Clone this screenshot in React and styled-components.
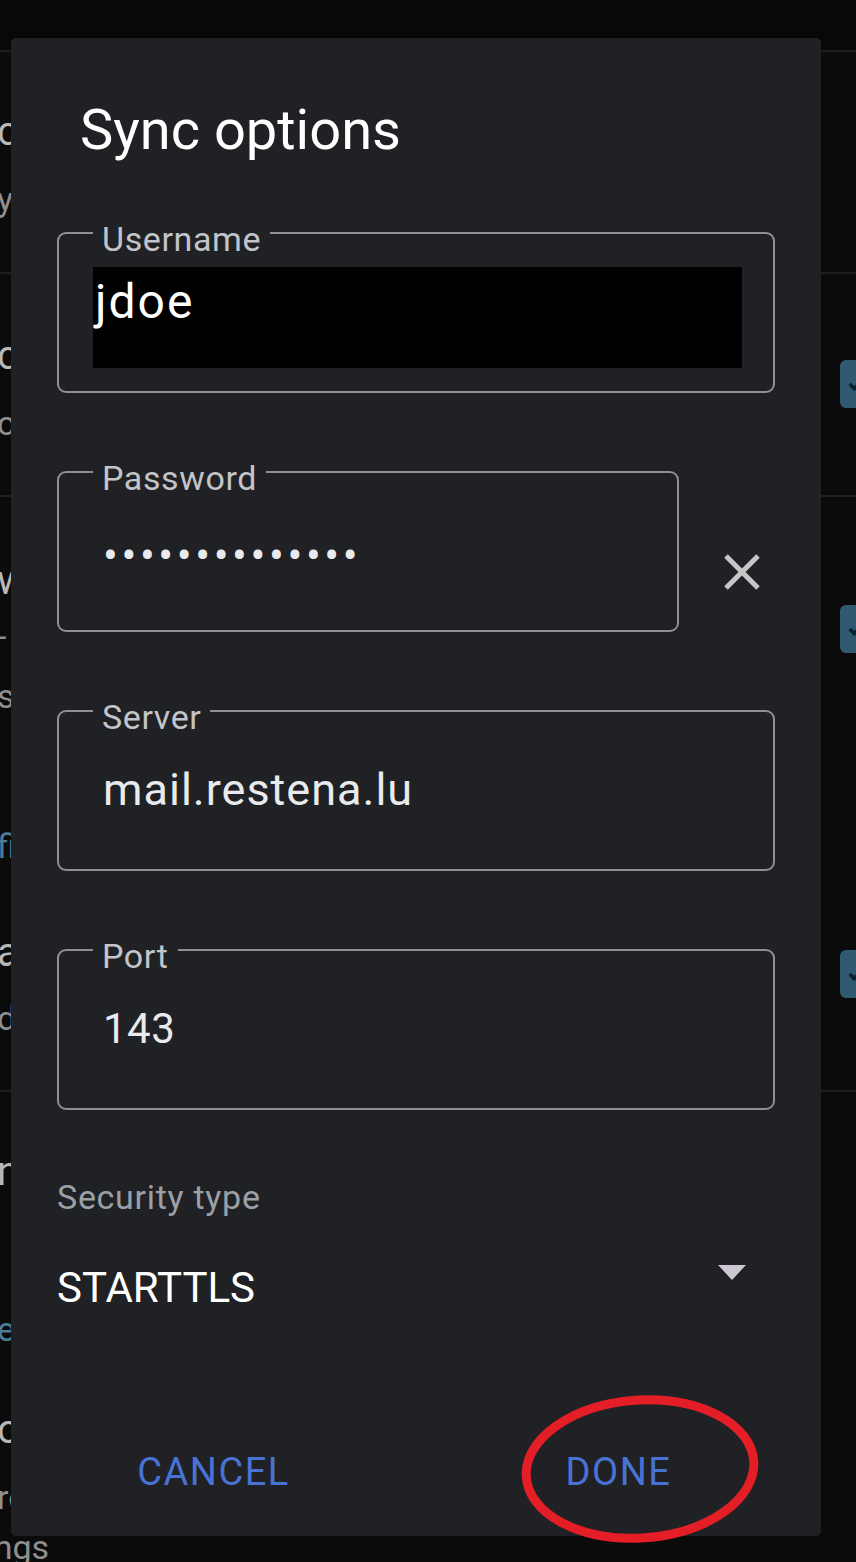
import React from "react";
import styled, { createGlobalStyle } from "styled-components";

const GlobalStyle = createGlobalStyle`
  html, body {
    margin: 0;
    padding: 0;
    background: #0a0a0a;
  }
  * {
    box-sizing: border-box;
  }
`;

const Screen = styled.div`
  position: relative;
  width: 856px;
  height: 1562px;
  overflow: hidden;
  background: #0a0a0a;
  font-family: Roboto, "Noto Sans", sans-serif;
`;

/* ---------- settings list behind the dialog ---------- */

const TopBar = styled.div`
  height: 50px;
  background: #080808;
`;

const Separator = styled.div`
  height: 2px;
  background: #1f1f1f;
`;

const BgRow = styled.div`
  display: flex;
  height: ${(p) => p.$h}px;
  background: #0b0b0b;
`;

const BgTexts = styled.div`
  flex: 1;
  display: flex;
  flex-direction: column;
  margin-left: -3px;
`;

const BgLine = styled.div`
  margin-top: ${(p) => p.$mt || 0}px;
  margin-left: ${(p) => p.$ml || 0}px;
  font-size: ${(p) => (p.$title ? 40 : 34)}px;
  line-height: ${(p) => (p.$title ? 48 : 42)}px;
  color: ${(p) => (p.$link ? "#4d7c98" : p.$title ? "#b8b8b8" : "#8f8f8f")};
  white-space: nowrap;
`;

const BgChecks = styled.div`
  display: flex;
  flex-direction: column;
  margin-right: -34px;
`;

const Checkbox = styled.div`
  width: 50px;
  height: 48px;
  margin-top: ${(p) => p.$mt}px;
  border-radius: 6px;
  background: #2f5a72;
  display: flex;
  align-items: center;
  padding-left: 6px;
`;

/* ---------- dialog ---------- */

const Dialog = styled.div`
  position: absolute;
  left: 11px;
  top: 38px;
  width: 810px;
  height: 1498px;
  background: #202124;
  border-radius: 5px;
  display: flex;
  flex-direction: column;
  padding: 60px 46px 0;
`;

const Title = styled.h1`
  margin: 0 0 0 23px;
  font-size: 56px;
  line-height: 64px;
  font-weight: 400;
  color: #ffffff;
`;

const FieldRow = styled.div`
  display: flex;
  align-items: flex-end;
  margin-top: ${(p) => p.$mt}px;
`;

const Field = styled.fieldset`
  margin: 0;
  padding: 0 0 0 34px;
  border: 2px solid #8f9095;
  border-radius: 9px;
  width: ${(p) => p.$w || "100%"};
  min-width: 0;
`;

const Legend = styled.legend`
  padding: 12px 9px 0;
  font-size: 34px;
  line-height: 40px;
  letter-spacing: 0.6px;
  color: #c3c4c9;
`;

const Value = styled.div`
  display: flex;
  align-items: center;
  height: 132px;
  padding: 0 0 ${(p) => p.$lift}px 10px;
  font-size: ${(p) => p.$size || 45}px;
  letter-spacing: ${(p) => (p.$size ? 0.5 : 1)}px;
  color: #e8eaed;
  white-space: nowrap;
`;

const Redacted = styled.div`
  display: flex;
  align-items: center;
  width: 649px;
  height: 101px;
  margin: 8px 0 23px;
  padding: 0 0 32px 2px;
  background: #000000;
  font-size: 48px;
  letter-spacing: 2px;
  color: #ffffff;
`;

const Dots = styled.span`
  font-size: 44px;
  letter-spacing: 3.6px;
  color: #e8eaed;
`;

const ClearButton = styled.button`
  display: flex;
  align-items: center;
  justify-content: center;
  width: 38px;
  height: 38px;
  margin: 0 0 41px 44px;
  padding: 0;
  border: none;
  background: none;
  color: #c6c6c6;
`;

const SelectLabel = styled.div`
  margin-top: 67px;
  font-size: 34px;
  line-height: 40px;
  letter-spacing: 0.7px;
  color: #9aa0a6;
`;

const SelectRow = styled.div`
  display: flex;
  justify-content: space-between;
  align-items: flex-start;
  margin-top: 46px;
`;

const SelectValue = styled.div`
  font-size: 42px;
  line-height: 50px;
  color: #ffffff;
`;

const Caret = styled.svg`
  margin: 2px 29px 0 0;
`;

const Buttons = styled.div`
  display: flex;
  height: 128px;
  margin: auto -46px 0;
`;

const TextButton = styled.button`
  flex: 1;
  border: none;
  background: none;
  padding: 0;
  font-family: Roboto, "Noto Sans", sans-serif;
  font-size: 38px;
  letter-spacing: 1.5px;
  color: #4873d4;
`;

const Mark = styled.svg`
  position: absolute;
  left: 507px;
  top: 1355px;
  pointer-events: none;
`;

const CheckIcon = () => (
  <svg width="22" height="22" viewBox="0 0 24 24">
    <path d="M4 12l5 5L20 6" fill="none" stroke="#0d2230" strokeWidth="4" />
  </svg>
);

const App = () => {
  return (
    <Screen>
      <GlobalStyle />
      <TopBar />
      <Separator />
      <BgRow $h={220}>
        <BgTexts>
          <BgLine $title $mt={56}>contacts</BgLine>
          <BgLine $mt={22}>your address book</BgLine>
        </BgTexts>
      </BgRow>
      <Separator />
      <BgRow $h={221}>
        <BgTexts>
          <BgLine $title $mt={58}>calendar</BgLine>
          <BgLine $mt={22}>calendars and events</BgLine>
        </BgTexts>
        <BgChecks>
          <Checkbox $mt={86}>
            <CheckIcon />
          </Checkbox>
        </BgChecks>
      </BgRow>
      <Separator />
      <BgRow $h={593}>
        <BgTexts>
          <BgLine $title $mt={60}>web</BgLine>
          <BgLine $mt={10}>- tasks</BgLine>
          <BgLine $mt={18}>sync</BgLine>
          <BgLine $link $mt={108}>find out more</BgLine>
          <BgLine $title $mt={62}>address</BgLine>
          <BgLine $mt={20}>default</BgLine>
        </BgTexts>
        <BgChecks>
          <Checkbox $mt={108}>
            <CheckIcon />
          </Checkbox>
          <Checkbox $mt={297}>
            <CheckIcon />
          </Checkbox>
        </BgChecks>
      </BgRow>
      <Separator />
      <BgRow $h={470}>
        <BgTexts>
          <BgLine $title $mt={56}>notes</BgLine>
          <BgLine $link $mt={112}>edit</BgLine>
          <BgLine $title $mt={56}>open</BgLine>
          <BgLine $mt={22}>reminders</BgLine>
          <BgLine $mt={8} $ml={-72}>Settings</BgLine>
        </BgTexts>
      </BgRow>

      <Dialog>
        <Title>Sync options</Title>

        <FieldRow $mt={45}>
          <Field>
            <Legend>Username</Legend>
            <Redacted>jdoe</Redacted>
          </Field>
        </FieldRow>

        <FieldRow $mt={53}>
          <Field $w="622px">
            <Legend>Password</Legend>
            <Value $lift={17}>
              <Dots>••••••••••••••</Dots>
            </Value>
          </Field>
          <ClearButton aria-label="Clear password">
            <svg width="38" height="38" viewBox="0 0 38 38">
              <path
                d="M3 3L35 35M35 3L3 35"
                stroke="currentColor"
                strokeWidth="5"
                fill="none"
              />
            </svg>
          </ClearButton>
        </FieldRow>

        <FieldRow $mt={53}>
          <Field>
            <Legend>Server</Legend>
            <Value $lift={28}>mail.restena.lu</Value>
          </Field>
        </FieldRow>

        <FieldRow $mt={53}>
          <Field>
            <Legend>Port</Legend>
            <Value $lift={28} $size={42}>
              143
            </Value>
          </Field>
        </FieldRow>

        <SelectLabel>Security type</SelectLabel>
        <SelectRow>
          <SelectValue>STARTTLS</SelectValue>
          <Caret width="28" height="15" viewBox="0 0 28 15">
            <polygon points="0,0 28,0 14,15" fill="#cdc8d4" />
          </Caret>
        </SelectRow>

        <Buttons>
          <TextButton>CANCEL</TextButton>
          <TextButton>DONE</TextButton>
        </Buttons>

        <Mark width="244" height="152" viewBox="0 0 244 152">
          <ellipse
            cx="122"
            cy="76"
            rx="114"
            ry="69"
            fill="none"
            stroke="#e41e26"
            strokeWidth="9"
            transform="rotate(-4 122 76)"
          />
        </Mark>
      </Dialog>
    </Screen>
  );
};

export default App;
